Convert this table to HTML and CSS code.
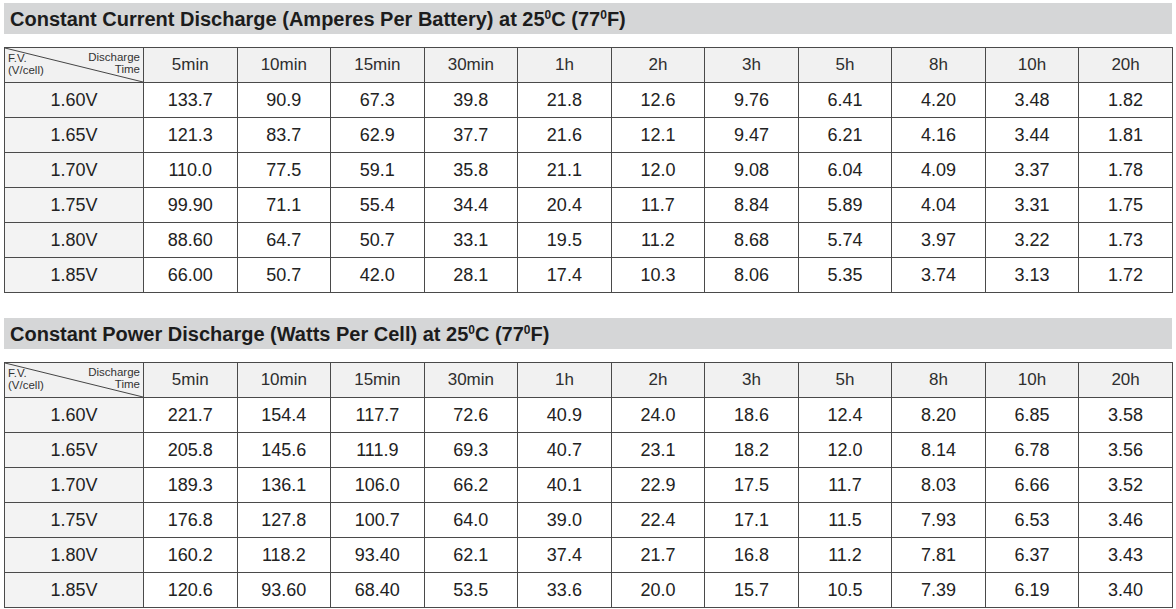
FILE: index.html
```html
<!DOCTYPE html>
<html>
<head>
<meta charset="utf-8">
<link rel="stylesheet" href="styles.css">
</head>
<body>
<div class="page">
  <section class="block">
    <h2 class="title">Constant Current Discharge (Amperes Per Battery) at 25<sup>0</sup>C (77<sup>0</sup>F)</h2>
    <table class="grid">
      <colgroup><col class="c0"><col span="11" class="cn"></colgroup>
      <thead>
        <tr>
          <th class="corner">
            <svg class="diag" viewBox="0 0 100 100" preserveAspectRatio="none"><line x1="0" y1="0" x2="100" y2="100" stroke="#444" stroke-width="1" vector-effect="non-scaling-stroke"/></svg>
            <span class="ct">Discharge<br>Time</span>
            <span class="cb">F.V.<br>(V/cell)</span>
          </th>
          <th>5min</th><th>10min</th><th>15min</th><th>30min</th><th>1h</th><th>2h</th><th>3h</th><th>5h</th><th>8h</th><th>10h</th><th>20h</th>
        </tr>
      </thead>
      <tbody>
        <tr><th>1.60V</th><td>133.7</td><td>90.9</td><td>67.3</td><td>39.8</td><td>21.8</td><td>12.6</td><td>9.76</td><td>6.41</td><td>4.20</td><td>3.48</td><td>1.82</td></tr>
        <tr><th>1.65V</th><td>121.3</td><td>83.7</td><td>62.9</td><td>37.7</td><td>21.6</td><td>12.1</td><td>9.47</td><td>6.21</td><td>4.16</td><td>3.44</td><td>1.81</td></tr>
        <tr><th>1.70V</th><td>110.0</td><td>77.5</td><td>59.1</td><td>35.8</td><td>21.1</td><td>12.0</td><td>9.08</td><td>6.04</td><td>4.09</td><td>3.37</td><td>1.78</td></tr>
        <tr><th>1.75V</th><td>99.90</td><td>71.1</td><td>55.4</td><td>34.4</td><td>20.4</td><td>11.7</td><td>8.84</td><td>5.89</td><td>4.04</td><td>3.31</td><td>1.75</td></tr>
        <tr><th>1.80V</th><td>88.60</td><td>64.7</td><td>50.7</td><td>33.1</td><td>19.5</td><td>11.2</td><td>8.68</td><td>5.74</td><td>3.97</td><td>3.22</td><td>1.73</td></tr>
        <tr><th>1.85V</th><td>66.00</td><td>50.7</td><td>42.0</td><td>28.1</td><td>17.4</td><td>10.3</td><td>8.06</td><td>5.35</td><td>3.74</td><td>3.13</td><td>1.72</td></tr>
      </tbody>
    </table>
  </section>
  <section class="block second">
    <h2 class="title">Constant Power Discharge (Watts Per Cell) at 25<sup>0</sup>C (77<sup>0</sup>F)</h2>
    <table class="grid">
      <colgroup><col class="c0"><col span="11" class="cn"></colgroup>
      <thead>
        <tr>
          <th class="corner">
            <svg class="diag" viewBox="0 0 100 100" preserveAspectRatio="none"><line x1="0" y1="0" x2="100" y2="100" stroke="#444" stroke-width="1" vector-effect="non-scaling-stroke"/></svg>
            <span class="ct">Discharge<br>Time</span>
            <span class="cb">F.V.<br>(V/cell)</span>
          </th>
          <th>5min</th><th>10min</th><th>15min</th><th>30min</th><th>1h</th><th>2h</th><th>3h</th><th>5h</th><th>8h</th><th>10h</th><th>20h</th>
        </tr>
      </thead>
      <tbody>
        <tr><th>1.60V</th><td>221.7</td><td>154.4</td><td>117.7</td><td>72.6</td><td>40.9</td><td>24.0</td><td>18.6</td><td>12.4</td><td>8.20</td><td>6.85</td><td>3.58</td></tr>
        <tr><th>1.65V</th><td>205.8</td><td>145.6</td><td>111.9</td><td>69.3</td><td>40.7</td><td>23.1</td><td>18.2</td><td>12.0</td><td>8.14</td><td>6.78</td><td>3.56</td></tr>
        <tr><th>1.70V</th><td>189.3</td><td>136.1</td><td>106.0</td><td>66.2</td><td>40.1</td><td>22.9</td><td>17.5</td><td>11.7</td><td>8.03</td><td>6.66</td><td>3.52</td></tr>
        <tr><th>1.75V</th><td>176.8</td><td>127.8</td><td>100.7</td><td>64.0</td><td>39.0</td><td>22.4</td><td>17.1</td><td>11.5</td><td>7.93</td><td>6.53</td><td>3.46</td></tr>
        <tr><th>1.80V</th><td>160.2</td><td>118.2</td><td>93.40</td><td>62.1</td><td>37.4</td><td>21.7</td><td>16.8</td><td>11.2</td><td>7.81</td><td>6.37</td><td>3.43</td></tr>
        <tr><th>1.85V</th><td>120.6</td><td>93.60</td><td>68.40</td><td>53.5</td><td>33.6</td><td>20.0</td><td>15.7</td><td>10.5</td><td>7.39</td><td>6.19</td><td>3.40</td></tr>
      </tbody>
    </table>
  </section>
</div>
</body>
</html>
```
FILE: styles.css
```css
html, body {
  margin: 0;
  padding: 0;
  background: #ffffff;
}
.page {
  padding: 3px 4px 0 4px;
  font-family: "Liberation Sans", Arial, sans-serif;
  color: #222;
}
.block.second {
  margin-top: 25px;
}
.title {
  margin: 0 0 13px 0;
  height: 31px;
  line-height: 32px;
  background: #d5d6d7;
  padding-left: 6px;
  font-size: 20px;
  font-weight: bold;
  color: #1c1c1c;
}
.title sup {
  font-size: 12px;
  vertical-align: 7px;
  line-height: 0;
}
.grid {
  width: 1168px;
  border-collapse: collapse;
  table-layout: fixed;
}
.c0 { width: 139px; }
.cn { width: 93.54px; }
.grid th, .grid td {
  border: 1px solid #4a4a4a;
  height: 34px;
  padding: 0;
  text-align: center;
  vertical-align: middle;
  font-weight: normal;
}
.grid thead th {
  background: #f1f1f1;
  font-size: 17px;
  color: #2e2e2e;
}
.grid tbody th {
  background: #f3f3f3;
  font-size: 18px;
  color: #222;
}
.grid tbody td {
  background: #fff;
  font-size: 18px;
  color: #222;
}
.grid th.corner {
  position: relative;
  padding: 0;
}
.diag {
  position: absolute;
  left: 0;
  top: 0;
  width: 100%;
  height: 100%;
  display: block;
}
.ct, .cb {
  position: absolute;
  font-size: 11.5px;
  line-height: 12px;
  color: #333;
}
.ct {
  right: 3px;
  top: 3px;
  text-align: right;
}
.cb {
  left: 3px;
  bottom: 6px;
  text-align: left;
}
```
